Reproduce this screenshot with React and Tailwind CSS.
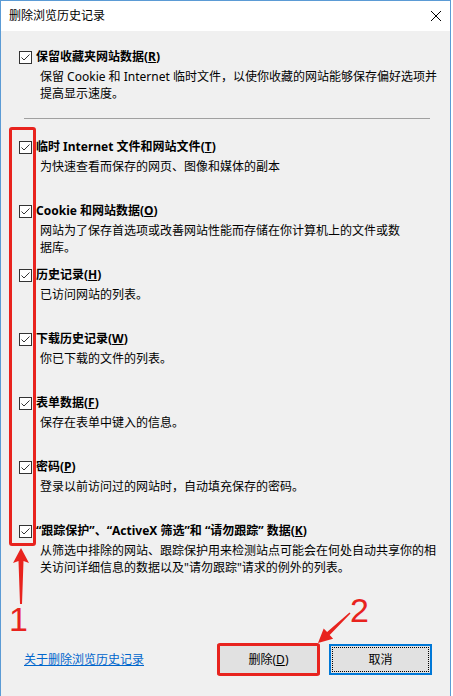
import React from "react";

const FONT = "font-['Noto_Sans','Noto_Sans_CJK_SC',sans-serif]";

const items = [
  { label: "临时 Internet 文件和网站文件", key: "T", lines: ["为快速查看而保存的网页、图像和媒体的副本"] },
  {
    label: "Cookie 和网站数据",
    key: "O",
    lines: ["网站为了保存首选项或改善网站性能而存储在你计算机上的文件或数", "据库。"],
  },
  { label: "历史记录", key: "H", lines: ["已访问网站的列表。"] },
  { label: "下载历史记录", key: "W", lines: ["你已下载的文件的列表。"] },
  { label: "表单数据", key: "F", lines: ["保存在表单中键入的信息。"] },
  { label: "密码", key: "P", lines: ["登录以前访问过的网站时，自动填充保存的密码。"] },
  {
    label: "“跟踪保护”、“ActiveX 筛选”和 “请勿跟踪” 数据",
    key: "K",
    lines: [
      "从筛选中排除的网站、跟踪保护用来检测站点可能会在何处自动共享你的相",
      "关访问详细信息的数据以及\"请勿跟踪\"请求的例外的列表。",
    ],
  },
];

const Checkbox = () => (
  <svg width="13" height="13" viewBox="0 0 13 13" className="shrink-0">
    <rect x="0.5" y="0.5" width="12" height="12" fill="#fff" stroke="#333" />
    <path d="M2.5 6.5 L5 9 L10.5 3.5" fill="none" stroke="#333" strokeWidth="1" />
  </svg>
);

const Item = ({ label, hotkey, lines, className }) => (
  <div className={`flex flex-col ${className || ""}`}>
    <div className="flex items-center h-[16px]">
      <div className="ml-[18px]">
        <Checkbox />
      </div>
      <span className="ml-[4px] font-bold leading-[16px] whitespace-nowrap">
        {label}(<span className="underline">{hotkey}</span>)
      </span>
    </div>
    <div className="mt-[3px] pl-[39px] leading-[17px]">
      {lines.map((line) => (
        <div key={line} className="whitespace-nowrap">
          {line}
        </div>
      ))}
    </div>
  </div>
);

export default function App() {
  return (
    <div className={`relative w-[453px] h-[696px] bg-white overflow-hidden text-[12px] text-black ${FONT}`}>
      <div className="w-[451px] h-[696px] border-l border-r border-t border-[#5b9bd5] bg-[#f0f0f0] flex flex-col">
        {/* title bar */}
        <div className="h-[30px] bg-white flex items-center justify-between pl-[8px] pr-[9px] shrink-0">
          <span className="leading-[16px]">删除浏览历史记录</span>
          <svg width="10" height="10" viewBox="0 0 10 10">
            <path d="M0 0 L10 10 M10 0 L0 10" stroke="#000" strokeWidth="1" />
          </svg>
        </div>

        <Item
          className="mt-[18px]"
          label="保留收藏夹网站数据"
          hotkey="R"
          lines={["保留 Cookie 和 Internet 临时文件，以使你收藏的网站能够保存偏好选项并", "提高显示速度。"]}
        />

        <div className="mt-[16px] ml-[23px] mr-[20px] h-px bg-[#a0a0a0]" />

        <div className="mt-[20px] flex flex-col">
          {items.map((it) => (
            <Item key={it.key} className="h-[64px]" label={it.label} hotkey={it.key} lines={it.lines} />
          ))}
        </div>

        <div className="mt-[57px] h-[31px] flex items-center">
          <span className="ml-[23px] text-[#0066cc] underline leading-[16px]">关于删除浏览历史记录</span>
          <div className="ml-auto mr-[18px] flex gap-[9px]">
            <div className="w-[103px] h-[31px] border border-[#adadad] bg-[#e1e1e1] flex items-center justify-center">
              删除(<span className="underline">D</span>)
            </div>
            <div className="w-[103px] h-[31px] border-2 border-[#0078d7] bg-[#e1e1e1] p-[1px]">
              <div className="h-full border border-dotted border-black flex items-center justify-center">取消</div>
            </div>
          </div>
        </div>
      </div>

      {/* annotations */}
      <div className="absolute left-[9px] top-[127px] w-[27px] h-[419px] border-[3px] border-[#e8231e] rounded-[3px]" />
      <div className="absolute left-[217px] top-[643px] w-[103px] h-[33px] border-[3px] border-[#e8231e] rounded-[3px]" />
      <svg className="absolute left-0 top-0 pointer-events-none" width="453" height="696">
        <polygon points="21,548 29,563 23.5,561 22,604 20,604 18.5,561 13,563" fill="#e8231e" />
        <polygon
          points="318,643 333.1,638.8 329.7,635.1 350.5,613.6 349.5,612.4 327.1,632.1 323.7,628.4"
          fill="#e8231e"
        />
      </svg>
      <span className="absolute left-[9px] top-[602px] text-[34px] leading-[34px] text-[#e8231e] font-['Liberation_Sans',sans-serif]">
        1
      </span>
      <span className="absolute left-[350px] top-[593px] text-[34px] leading-[34px] text-[#e8231e] font-['Liberation_Sans',sans-serif]">
        2
      </span>
    </div>
  );
}
